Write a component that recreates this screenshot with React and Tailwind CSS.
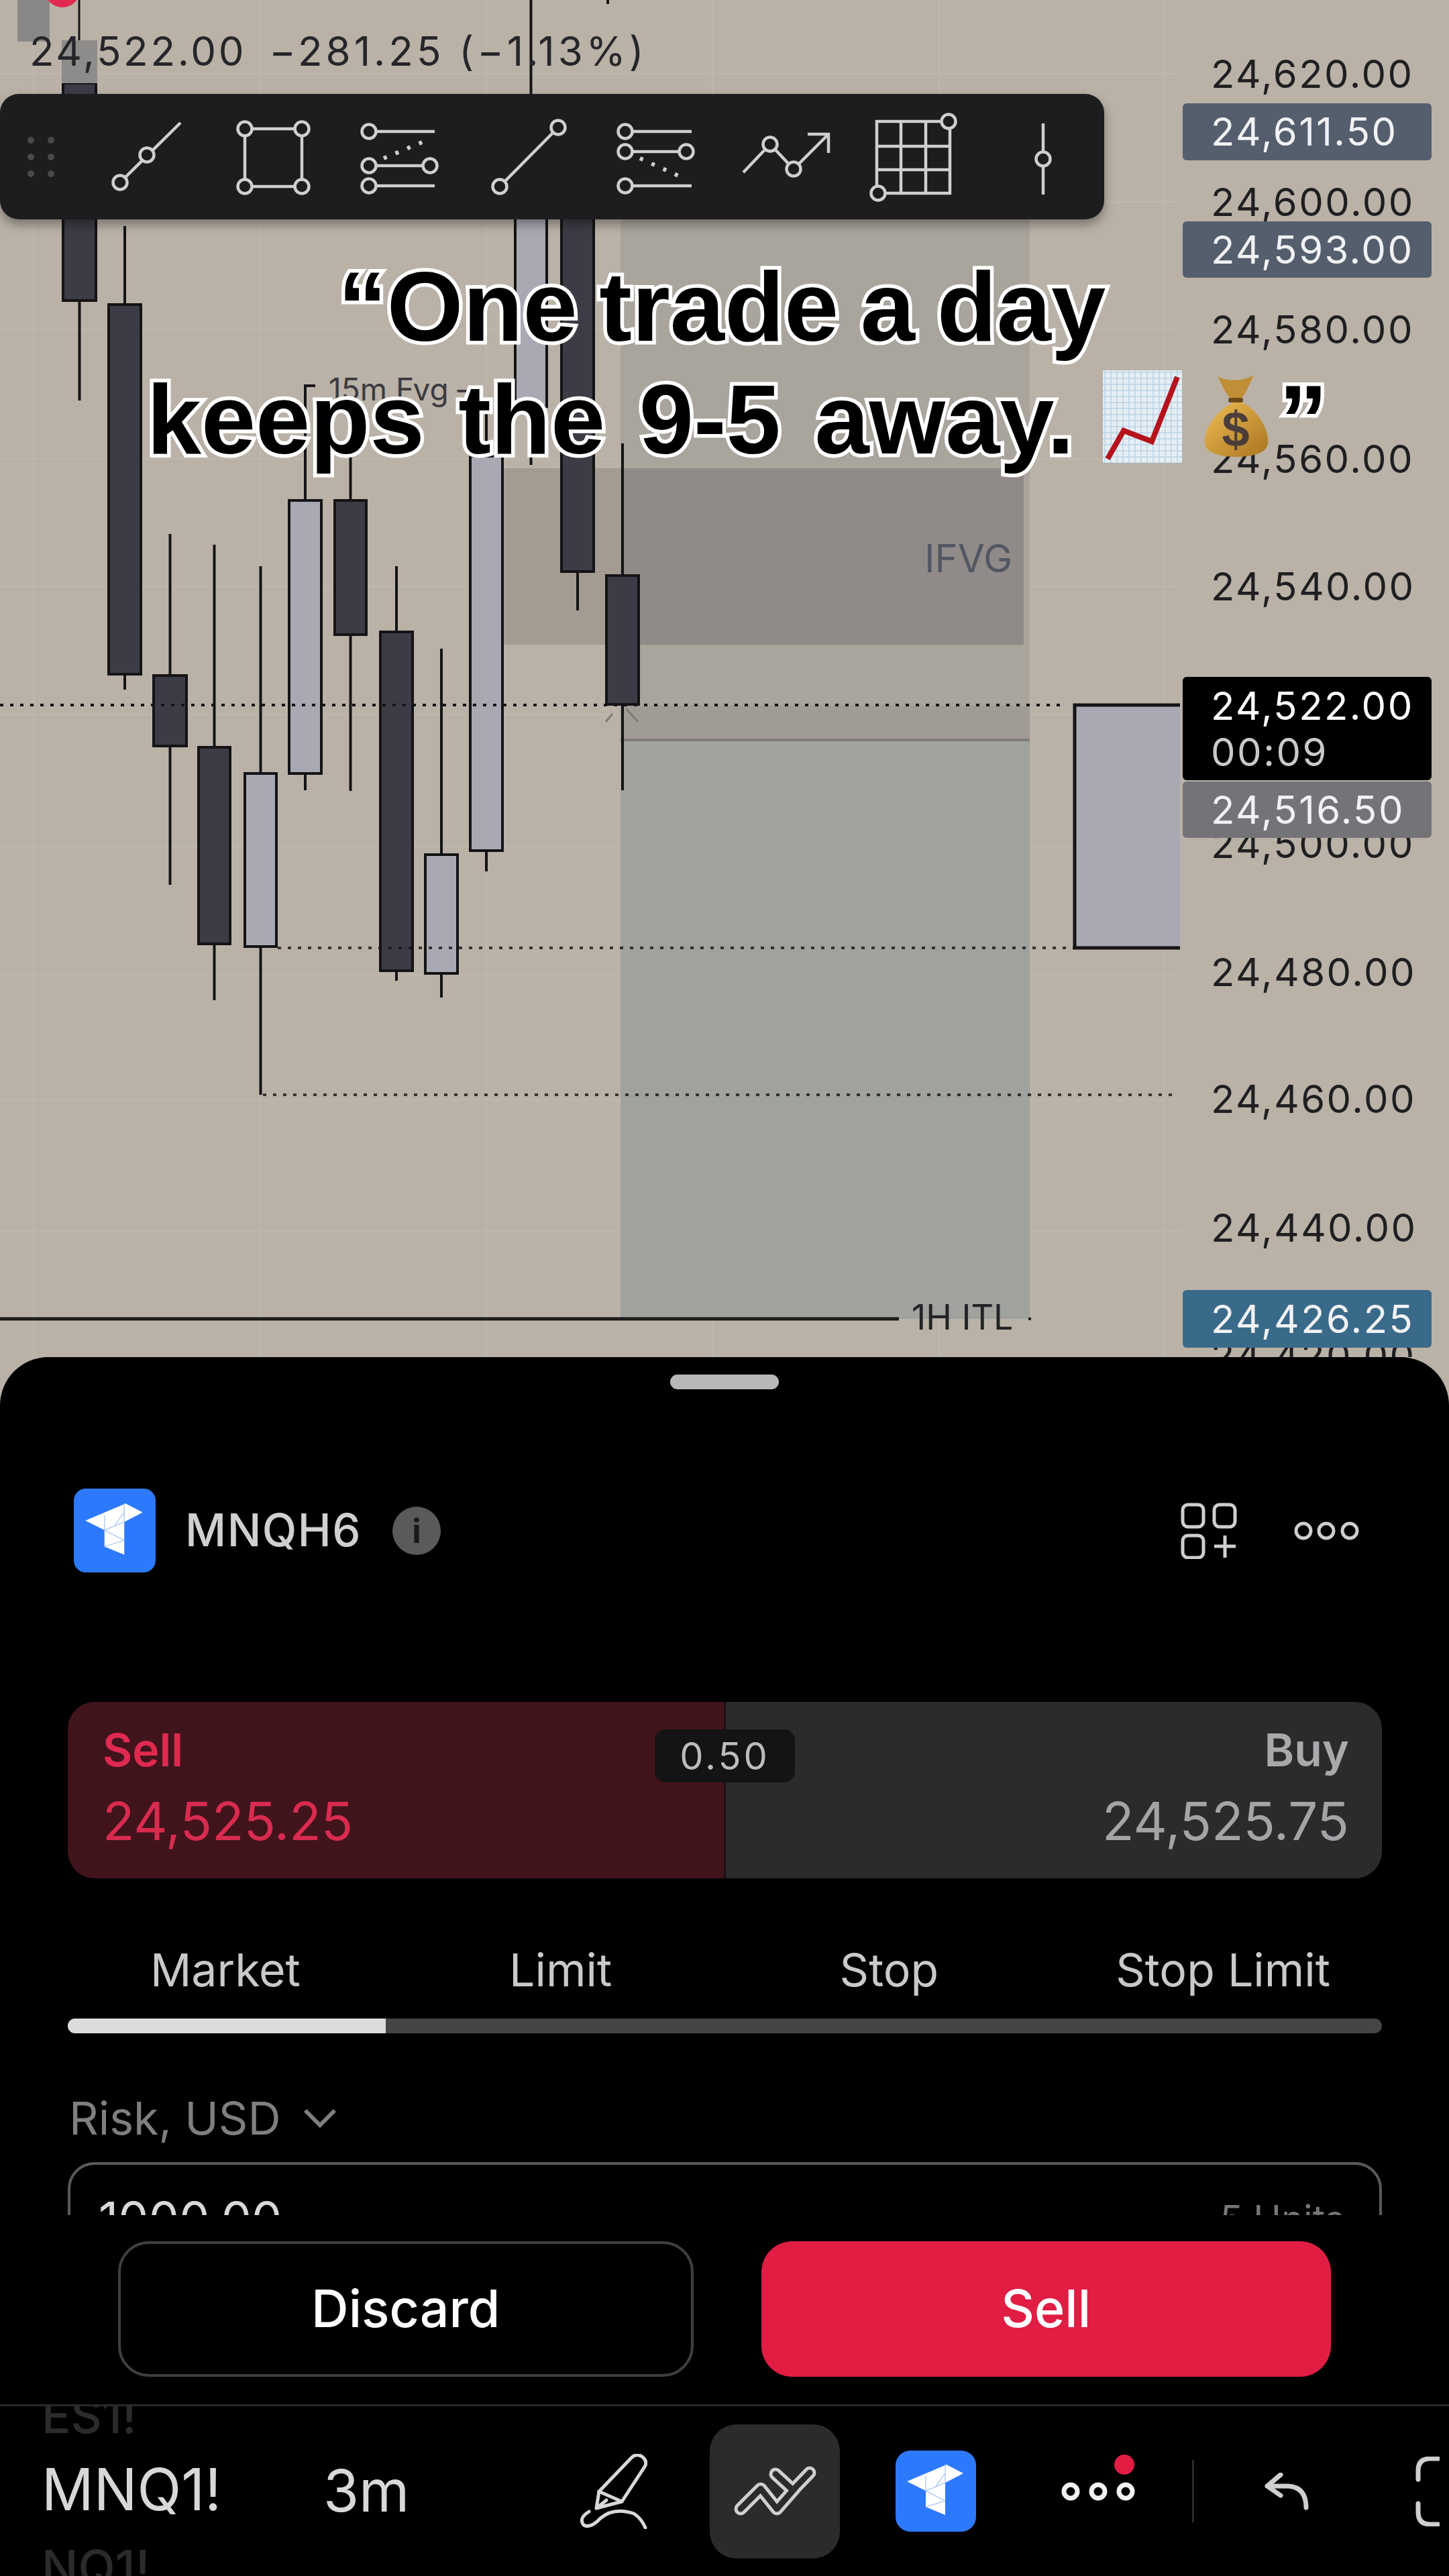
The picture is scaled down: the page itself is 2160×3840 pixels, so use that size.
import React from 'react';

const ink = '#141416';
const darkFill = '#3d3c46';
const lightFill = '#a9a9b4';

// x is the candle's left edge, body and wick in chart pixels
const candles = [
  { x: 94, w: 49, top: 124, bottom: 448, wickTop: 60, wickBottom: 597, fill: darkFill },
  { x: 162, w: 48, top: 454, bottom: 1005, wickTop: 337, wickBottom: 1028, fill: darkFill },
  { x: 229, w: 49, top: 1007, bottom: 1112, wickTop: 796, wickBottom: 1319, fill: darkFill },
  { x: 296, w: 47, top: 1114, bottom: 1407, wickTop: 812, wickBottom: 1491, fill: darkFill },
  { x: 365, w: 47, top: 1153, bottom: 1411, wickTop: 844, wickBottom: 1632, fill: lightFill },
  { x: 431, w: 48, top: 746, bottom: 1153, wickTop: 574, wickBottom: 1178, fill: lightFill },
  { x: 499, w: 47, top: 746, bottom: 946, wickTop: 680, wickBottom: 1179, fill: darkFill },
  { x: 567, w: 48, top: 942, bottom: 1447, wickTop: 844, wickBottom: 1462, fill: darkFill },
  { x: 634, w: 48, top: 1274, bottom: 1451, wickTop: 967, wickBottom: 1487, fill: lightFill },
  { x: 701, w: 48, top: 680, bottom: 1268, wickTop: 600, wickBottom: 1299, fill: lightFill },
  { x: 768, w: 47, top: 300, bottom: 606, wickTop: 0, wickBottom: 693, fill: lightFill },
  { x: 837, w: 48, top: 300, bottom: 852, wickTop: 300, wickBottom: 910, fill: darkFill },
  { x: 904, w: 48, top: 858, bottom: 1050, wickTop: 661, wickBottom: 1178, fill: darkFill },
];

const gridX = [50, 388, 725, 1062, 1400, 1735];
const gridY = [110, 301, 491, 684, 874, 1065, 1262, 1453, 1640, 1835];

const ticks = [
  ['24,620.00', 110],
  ['24,600.00', 301],
  ['24,580.00', 491],
  ['24,560.00', 684],
  ['24,540.00', 874],
  ['24,500.00', 1258],
  ['24,480.00', 1449],
  ['24,460.00', 1638],
  ['24,440.00', 1830],
  ['24,420.00', 2021],
];

const tags = [
  { label: '24,611.50', top: 154, height: 85, bg: 'bg-[#545e6d]' },
  { label: '24,593.00', top: 330, height: 84, bg: 'bg-[#545e6d]' },
  { label: '24,516.50', top: 1165, height: 84, bg: 'bg-[#747378]' },
  { label: '24,426.25', top: 1923, height: 86, bg: 'bg-[#3a6a8a]' },
];

function ChartDrawing() {
  return (
    <svg className="absolute inset-0" width="2160" height="2023" viewBox="0 0 2160 2023">
      {gridX.map((x) => (
        <line key={x} x1={x} x2={x} y1="0" y2="2023" stroke="#bfb8ad" strokeWidth="2" />
      ))}
      {gridY.map((y) => (
        <line key={y} x1="0" x2="1760" y1={y} y2={y} stroke="#bfb8ad" strokeWidth="2" />
      ))}

      {/* zones */}
      <rect x="925" y="327" width="610" height="776" fill="#a9a49c" />
      <rect x="751" y="698" width="174" height="263" fill="#a49b93" />
      <rect x="925" y="698" width="601" height="263" fill="#908b88" />
      <rect x="925" y="1052" width="610" height="51" fill="#a09b94" />
      <rect x="925" y="1101" width="610" height="4" fill="#7f7c78" />
      <rect x="925" y="1105" width="610" height="861" fill="#9fa29d" />

      {/* washed out candles behind the legend */}
      <rect x="26" y="0" width="48" height="62" fill="#8a8886" />
      <line x1="118" x2="118" y1="0" y2="60" stroke={ink} strokeWidth="3" />
      <circle cx="93" cy="-15" r="26" fill="#e0294f" />
      <line x1="906" x2="906" y1="0" y2="6" stroke={ink} strokeWidth="4" />
      <line x1="453" x2="470" y1="575" y2="575" stroke={ink} strokeWidth="4" />

      {candles.map((c) => (
        <g key={c.x}>
          <line x1={c.x + c.w / 2} x2={c.x + c.w / 2} y1={c.wickTop} y2={c.wickBottom} stroke={ink} strokeWidth="4" />
          <rect x={c.x} y={c.top} width={c.w} height={c.bottom - c.top} fill={c.fill} stroke={ink} strokeWidth="4" />
        </g>
      ))}
      <rect x="92" y="60" width="53" height="64" fill="#8e8c8a" />

      {/* price lines */}
      <line x1="0" x2="1586" y1="1051" y2="1051" stroke={ink} strokeWidth="4" strokeDasharray="5 10" />
      <line x1="414" x2="1600" y1="1413" y2="1413" stroke={ink} strokeOpacity="0.8" strokeWidth="4" strokeDasharray="5 10" />
      <line x1="392" x2="1748" y1="1632" y2="1632" stroke={ink} strokeOpacity="0.8" strokeWidth="4" strokeDasharray="5 10" />
      <line x1="0" x2="1340" y1="1966" y2="1966" stroke="#1c1b1b" strokeWidth="5" />
      <line x1="1533" x2="1537" y1="1966" y2="1966" stroke="#1c1b1b" strokeWidth="4" />

      {/* crosshair ticks */}
      <path d="M913 1064 L903 1076 M934 1057 L951 1076" stroke="#7d7b78" strokeWidth="3" fill="none" />

      {/* volume profile block at the right */}
      <path d="M1759 1051 H1602 V1413 H1759" fill={lightFill} stroke={ink} strokeWidth="5" />
    </svg>
  );
}

function ToolIcon({ from, to, children }) {
  return (
    <svg
      width={to - from}
      height="187"
      viewBox={`${from} 140 ${to - from} 187`}
      fill="none"
      stroke="#d0cfd0"
      strokeWidth="4.5"
    >
      {children}
    </svg>
  );
}

const Knob = ({ x, y }) => <circle cx={x} cy={y} r="10.5" fill="#1d1c1f" />;

function Toolbar() {
  return (
    <div className="absolute left-0 top-[140px] flex h-[187px] w-[1646px] rounded-[28px] bg-[#1d1c1f] shadow-[0_8px_16px_rgba(0,0,0,0.35)]">
      <ToolIcon from={0} to={120}>
        {[46, 76].map((x) =>
          [209, 234, 259].map((y) => <circle key={x + y} cx={x} cy={y} r="5" fill="#4a494c" stroke="none" />)
        )}
      </ToolIcon>
      <ToolIcon from={120} to={310}>
        <path d="M179 272 L269 183" />
        <Knob x={179} y={272} />
        <Knob x={219} y={231} />
      </ToolIcon>
      <ToolIcon from={310} to={500}>
        <rect x="365" y="192" width="85" height="86" />
        <Knob x={365} y={192} />
        <Knob x={450} y={192} />
        <Knob x={365} y={278} />
        <Knob x={450} y={278} />
      </ToolIcon>
      <ToolIcon from={500} to={690}>
        <path d="M550 196 H648 M550 247 H641 M550 277 H648" />
        <path d="M572 236 L641 207" strokeWidth="6" strokeDasharray="5 14" />
        <Knob x={550} y={196} />
        <Knob x={550} y={247} />
        <Knob x={641} y={247} />
        <Knob x={550} y={277} />
      </ToolIcon>
      <ToolIcon from={690} to={880}>
        <path d="M745 278 L832 190" />
        <Knob x={745} y={278} />
        <Knob x={832} y={190} />
      </ToolIcon>
      <ToolIcon from={880} to={1075}>
        <path d="M932 196 H1031 M932 226 H1023 M932 277 H1031" />
        <path d="M954 236 L1020 266" strokeWidth="6" strokeDasharray="5 14" />
        <Knob x={932} y={196} />
        <Knob x={932} y={226} />
        <Knob x={1023} y={226} />
        <Knob x={932} y={277} />
      </ToolIcon>
      <ToolIcon from={1075} to={1265}>
        <path d="M1108 257 L1148 215 L1183 252 L1235 200 M1204 200 H1235 V228" />
        <Knob x={1148} y={215} />
        <Knob x={1183} y={252} />
      </ToolIcon>
      <ToolIcon from={1265} to={1460}>
        <path d="M1307 181 H1416 V288 H1307 Z M1343 181 V288 M1380 181 V288 M1307 218 H1416 M1307 253 H1416" />
        <Knob x={1414} y={181} />
        <Knob x={1309} y={288} />
      </ToolIcon>
      <ToolIcon from={1460} to={1646}>
        <path d="M1555 184 V290" />
        <Knob x={1555} y={237} />
      </ToolIcon>
    </div>
  );
}

function ChartEmoji() {
  const lines = Array.from({ length: 14 }, (_, i) => i * 9 + 3);
  return (
    <svg className="mb-[20px] ml-[43px] shrink-0" width="118" height="138" viewBox="0 0 118 138">
      <rect width="118" height="138" fill="#e6eef4" />
      {lines.map((p) => (
        <line key={`v${p}`} x1={p} x2={p} y1="0" y2="138" stroke="#b9d3e6" strokeWidth="1.5" />
      ))}
      {lines.concat([129, 138]).map((p) => (
        <line key={`h${p}`} x1="0" x2="118" y1={p} y2={p} stroke="#b9d3e6" strokeWidth="1.5" />
      ))}
      <path d="M7 132 L31 90 L73 106 L111 10" fill="none" stroke="#b5121c" strokeWidth="8" />
    </svg>
  );
}

function MoneyBagEmoji() {
  return (
    <svg className="mb-[29px] ml-[31px] shrink-0" width="99" height="124" viewBox="0 0 99 124">
      <defs>
        <linearGradient id="bagFill" x1="0" x2="1" y1="0" y2="1">
          <stop offset="0" stopColor="#efbe55" />
          <stop offset="1" stopColor="#a9741f" />
        </linearGradient>
      </defs>
      <path d="M50 42 C22 50 0 85 3 104 C5 120 30 124 50 124 C70 124 95 120 97 104 C100 85 80 50 56 42 Z" fill="url(#bagFill)" />
      <path d="M22 4 C36 12 60 12 76 2 L64 28 Q57 36 57 42 L41 42 Q40 34 34 28 Z" fill="#c08e36" />
      <rect x="38" y="36" width="22" height="7" rx="3" fill="#6d4a1a" />
      <text x="49" y="108" textAnchor="middle" fontSize="74" fontWeight="700" fontFamily="Liberation Sans, sans-serif" fill="#4b3d3a">$</text>
    </svg>
  );
}

function Caption() {
  const line = "[-webkit-text-stroke:11px_white] [paint-order:stroke_fill] whitespace-pre";
  return (
    <div className="absolute left-0 top-[374px] flex w-[2160px] flex-col items-center text-[146px] font-bold leading-[168px] text-black [font-family:'Liberation_Sans',Arial,sans-serif]">
      <div className={`${line} mr-[8px] [word-spacing:-8px]`}>“One trade a day</div>
      <div className="ml-[38px] flex items-end">
        <span className={`${line} [word-spacing:10px]`}>keeps the 9-5 away.</span>
        <ChartEmoji />
        <MoneyBagEmoji />
        <span className={`${line} ml-[14px]`}>”</span>
      </div>
    </div>
  );
}

function Chart() {
  return (
    <section className="relative h-[2023px] w-full shrink-0 overflow-hidden">
      <ChartDrawing />

      <div className="absolute left-[44px] top-[40px] flex whitespace-pre text-[60px] leading-[72px] text-[#26262a]">
        <span className="tracking-[3.7px]">24,522.00</span>
        <span className="ml-[34px] tracking-[5px]">−281.25 (−1.13%)</span>
      </div>

      <div className="absolute left-[490px] top-[552px] text-[46px] leading-[56px] text-[#3b3b40]">15m Fvg –</div>
      <div className="absolute left-[1378px] top-[798px] text-[58px] leading-[68px] text-[#535663]">IFVG</div>
      <div className="absolute left-[1359px] top-[1934px] text-[52px] leading-[60px] text-[#232326]">1H ITL</div>

      {ticks.map(([label, y]) => (
        <div
          key={label}
          className="absolute left-[1805px] text-[58px] leading-[70px] tracking-[2.5px] text-[#1f1f22]"
          style={{ top: y - 35 }}
        >
          {label}
        </div>
      ))}

      {tags.map((t) => (
        <div
          key={t.label}
          className={`absolute left-[1763px] flex w-[371px] items-center rounded-[6px] pl-[42px] text-[58px] tracking-[2.5px] text-[#f2f2f4] ${t.bg}`}
          style={{ top: t.top, height: t.height }}
        >
          {t.label}
        </div>
      ))}

      <div className="absolute left-[1763px] top-[1009px] flex h-[154px] w-[371px] flex-col justify-center rounded-[6px] bg-black pl-[42px] tracking-[2.5px]">
        <span className="text-[58px] leading-[70px] text-white">24,522.00</span>
        <span className="text-[58px] leading-[68px] text-[#c9c9c9]">00:09</span>
      </div>

      <Toolbar />
      <Caption />
    </section>
  );
}

function TvLogo({ size, height, radius }) {
  return (
    <div className={`flex shrink-0 items-center justify-center bg-[#2d79fb] ${size} ${height} ${radius}`}>
      <svg className="h-full w-full" viewBox="0 0 120 121">
        <path d="M17 46 L76 21 L101 34 L74 48 L74 96 L45 84 L45 60 Z" fill="#ffffff" />
        <path d="M45 60 L74 48 M45 60 L74 75 M45 84 L74 75 M45 38 V60 M74 21 V48 M60 53 L74 34" fill="none" stroke="#b7cdf3" strokeWidth="1.5" />
      </svg>
    </div>
  );
}

function SheetHeader() {
  return (
    <div className="mt-[148px] flex h-[125px] items-center pl-[110px] pr-[134px]">
      <TvLogo size="w-[122px]" height="h-[125px]" radius="rounded-[18px]" />
      <span className="ml-[44px] text-[67px] font-medium tracking-[1.5px] text-[#d0cfd2]">MNQH6</span>
      <span className="ml-[46px] flex h-[72px] w-[72px] items-center justify-center rounded-full bg-[#5a5a5c] text-[50px] font-bold leading-none text-[#1a1a1a]">i</span>
      <svg className="ml-auto" width="84" height="84" viewBox="0 0 84 84" fill="none" stroke="#cfcfd1" strokeWidth="5">
        <rect x="3" y="3" width="31" height="33" rx="8" />
        <rect x="50" y="3" width="31" height="33" rx="8" />
        <rect x="3" y="49" width="31" height="33" rx="8" />
        <path d="M50 65 H82 M66 49 V82" />
      </svg>
      <svg className="ml-[85px]" width="97" height="30" viewBox="0 0 97 30" fill="none" stroke="#cfcfd1" strokeWidth="5">
        <circle cx="14" cy="15" r="11" />
        <circle cx="48" cy="15" r="11" />
        <circle cx="83" cy="15" r="11" />
      </svg>
    </div>
  );
}

function Quote() {
  return (
    <div className="relative ml-[101px] mr-[100px] mt-[193px] flex h-[263px] overflow-hidden rounded-[40px]">
      <div className="flex w-[981px] flex-col border-r-[3px] border-[#1c1114] bg-[#41141c] pl-[52px] text-[#e0294f]">
        <span className="mt-[31px] text-[68px] font-semibold leading-[80px]">Sell</span>
        <span className="mt-[22px] text-[78px] leading-[90px] text-[#d92b4f]">24,525.25</span>
      </div>
      <div className="flex flex-1 flex-col items-end bg-[#2b2a2c] pr-[49px]">
        <span className="mt-[31px] text-[68px] font-semibold leading-[80px] text-[#a9a8ab]">Buy</span>
        <span className="mt-[22px] text-[78px] leading-[90px] text-[#a4a3a6]">24,525.75</span>
      </div>
      <div className="absolute left-[875px] top-[41px] flex h-[79px] w-[209px] items-center justify-center rounded-[16px] bg-[#141315] text-[56px] tracking-[4px] text-[#bcbcbe]">
        0.50
      </div>
    </div>
  );
}

function OrderTabs() {
  return (
    <div className="ml-[101px] mr-[100px]">
      <div className="mt-[85px] grid h-[80px] grid-cols-4 items-center text-center text-[68px] text-[#c9c8cb]">
        <span className="pr-[20px]">Market</span>
        <span>Limit</span>
        <span>Stop</span>
        <span className="pl-[16px]">Stop Limit</span>
      </div>
      <div className="mt-[44px] h-[22px] overflow-hidden rounded-full bg-[#454447]">
        <div className="h-full w-[474px] bg-[#dcdbde]" />
      </div>
    </div>
  );
}

function RiskField() {
  return (
    <div className="ml-[101px] mr-[100px]">
      <div className="mt-[86px] flex h-[80px] items-center text-[68px] text-[#7f7e81]">
        <span className="ml-[2px]">Risk, USD</span>
        <svg className="ml-[34px]" width="50" height="30" viewBox="0 0 50 30" fill="none" stroke="#7f7e81" strokeWidth="6">
          <path d="M3 4 L25 26 L47 4" />
        </svg>
      </div>
      <div className="mt-[26px] flex h-[140px] items-start justify-between rounded-[40px] border-[4px] border-[#5a5a5c] pl-[42px] pr-[52px] pt-[41px]">
        <span className="text-[72px] leading-[80px] text-[#d8d7da]">1000.00</span>
        <span className="text-[56px] leading-[80px] text-[#77767a]">5 Units</span>
      </div>
    </div>
  );
}

function ActionButtons() {
  return (
    <div className="mt-[39px] flex h-[202px] gap-[101px] px-[176px] text-[77px] font-medium text-white">
      <button className="flex-1 rounded-[46px] border-[4px] border-[#3f3e41]">Discard</button>
      <button className="flex-1 rounded-[46px] bg-[#e11d44]">Sell</button>
    </div>
  );
}

function BottomBar() {
  return (
    <div className="flex h-[253px] items-center overflow-hidden pl-[62px]">
      <div className="flex w-[420px] shrink-0 flex-col gap-[24px] text-[86px] leading-[92px]">
        <span className="mb-[-6px] text-[72px] font-medium text-[#2b2a2c]">ES1!</span>
        <span className="text-[#d8d7da]">MNQ1!</span>
        <span className="text-[72px] font-medium text-[#2b2a2c]">NQ1!</span>
      </div>
      <span className="w-[383px] shrink-0 text-[86px] text-[#d8d7da]">3m</span>

      <svg className="shrink-0" width="100" height="112" viewBox="865 3656 100 112" fill="none" stroke="#d8d7da" strokeWidth="5" strokeLinejoin="round" strokeLinecap="round">
        <path d="M940 3663 Q948 3654 957 3660 Q966 3667 961 3675 L927 3727 L893 3712 Z" />
        <path d="M893 3712 L889 3737 L927 3727 M889 3737 L904 3725" />
        <path d="M878 3742 Q862 3752 870 3762 Q880 3768 895 3752 Q915 3735 945 3745 Q956 3752 962 3766" />
      </svg>

      <div className="ml-[93px] flex h-[200px] w-[194px] shrink-0 items-center justify-center rounded-[40px] bg-[#2b2a2c]">
        <svg width="126" height="76" viewBox="1092 3674 126 76" fill="none" strokeLinejoin="round" strokeLinecap="round">
          <path d="M1104 3738 L1134 3708 L1158 3738 L1186 3706 M1156 3686 L1182 3710 L1207 3684" stroke="#cfcfd1" strokeWidth="19" />
          <path d="M1104 3738 L1134 3708 L1158 3738 L1186 3706 M1156 3686 L1182 3710 L1207 3684" stroke="#2b2a2c" strokeWidth="9" />
        </svg>
      </div>

      <div className="ml-[83px]">
        <TvLogo size="w-[120px]" height="h-[121px]" radius="rounded-[22px]" />
      </div>

      <div className="relative ml-[127px] shrink-0">
        <svg className="block" width="110" height="28" viewBox="0 0 110 28" fill="none" stroke="#f2f2f4" strokeWidth="7">
          <circle cx="14" cy="14" r="10" />
          <circle cx="55" cy="14" r="10" />
          <circle cx="96" cy="14" r="10" />
        </svg>
        <span className="absolute right-[1px] top-[-41px] h-[30px] w-[30px] rounded-full bg-[#e11d44]" />
      </div>

      <div className="ml-[85px] h-[93px] w-[3px] shrink-0 bg-[#2a2a2c]" />

      <svg className="ml-[105px] shrink-0" width="68" height="56" viewBox="0 0 68 56" fill="none" stroke="#cfcfd1" strokeWidth="7" strokeLinecap="round" strokeLinejoin="round">
        <path d="M24 3 L4 20 L24 34 M4 20 H36 Q62 22 62 52" />
      </svg>

      <svg className="ml-[157px] shrink-0" width="36" height="104" viewBox="0 0 36 104" fill="none" stroke="#cfcfd1" strokeWidth="7" strokeLinecap="round">
        <path d="M34 3 H22 Q4 3 4 21 V34 M4 70 V83 Q4 101 22 101 H34" />
      </svg>
    </div>
  );
}

function TradeSheet() {
  return (
    <section className="relative flex h-[1817px] flex-col overflow-hidden rounded-t-[72px] bg-black">
      <div className="mx-auto mt-[26px] h-[22px] w-[162px] shrink-0 rounded-full bg-[#b8b7ba]" />
      <div className="h-[1231px] shrink-0 overflow-hidden">
        <SheetHeader />
        <Quote />
        <OrderTabs />
        <RiskField />
      </div>
      <ActionButtons />
      <div className="mt-[41px] h-[3px] shrink-0 bg-[#2a2a2c]" />
      <BottomBar />
    </section>
  );
}

export default function App() {
  return (
    <div className="flex h-[3840px] w-[2160px] flex-col overflow-hidden bg-[#bab2a7] [font-family:Inter,'Liberation_Sans',sans-serif]">
      <Chart />
      <TradeSheet />
    </div>
  );
}
